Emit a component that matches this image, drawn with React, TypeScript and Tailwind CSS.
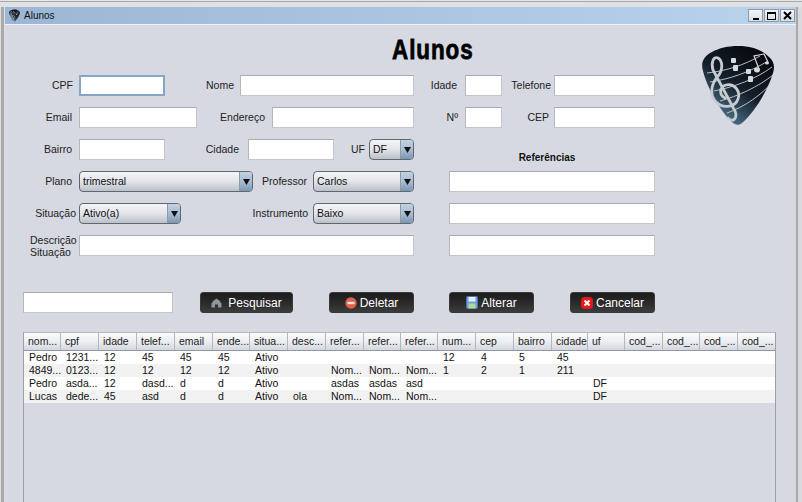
const headers = ['nom...', 'cpf', 'idade', 'telef...', 'email', 'ende...', 'situa...', 'desc...', 'refer...', 'refer...', 'refer...', 'num...', 'cep', 'bairro', 'cidade', 'uf', 'cod_...', 'cod_...', 'cod_...', 'cod_...']

const rows = [
  ['Pedro', '1231...', '12', '45', '45', '45', 'Ativo', '', '', '', '', '12', '4', '5', '45', '', '', '', '', ''],
  ['4849...', '0123...', '12', '12', '12', '12', 'Ativo', '', 'Nom...', 'Nom...', 'Nom...', '1', '2', '1', '211', '', '', '', '', ''],
  ['Pedro', 'asda...', '12', 'dasd...', 'd', 'd', 'Ativo', '', 'asdas', 'asdas', 'asd', '', '', '', '', 'DF', '', '', '', ''],
  ['Lucas', 'dede...', '45', 'asd', 'd', 'd', 'Ativo', 'ola', 'Nom...', 'Nom...', 'Nom...', '', '', '', '', 'DF', '', '', '', ''],
]

// the table columns are not all the same width in the picture
const tableCols = 'grid-cols-[37px_38px_38px_38px_38px_37px_38px_38px_38px_37px_37px_38px_38px_38px_36px_37px_38px_37px_38px_37px]'

function Pick({ className, id }: { className: string; id: string }) {
  return (
    <svg viewBox="0 0 72 81" className={className}>
      <defs>
        <linearGradient id={id} x1="0.8" y1="0.05" x2="0.25" y2="0.9">
          <stop offset="0" stopColor="#05080b" />
          <stop offset="0.55" stopColor="#141f2a" />
          <stop offset="1" stopColor="#4a7088" />
        </linearGradient>
      </defs>
      <path d="M36 1C50 1 60 5 67 12C72 16 73 22 71 28C65 48 50 70 40 78C37 81 33 80 30 77C20 68 5 44 0.5 24C-1 17 2 11 10 7C17 3 26 1 36 1Z" fill={`url(#${id})`} />
      <g fill="none" stroke="#c9ced3" strokeWidth="0.9">
        <path d="M5 28C24 26 42 20 58 11" />
        <path d="M8 37C28 34 48 27 66 16" />
        <path d="M12 46C32 42 54 34 70 22" />
        <path d="M18 56C36 51 56 42 71 30" />
        <path d="M25 68C42 62 60 50 71 36" />
      </g>
      <path d="M23 53C17 50 17 42 24 40C32 38 39 46 36 54C33 63 20 64 13 56C7 48 10 38 16 31C21 25 21 16 16 13C11 11 9 18 11 25L33 66C36 74 30 78 26 73" fill="none" stroke="#c6cbd0" strokeWidth="2.8" strokeLinecap="round" />
      <g fill="#d6dade">
        <rect x="29" y="13" width="5" height="5" rx="1" />
        <rect x="31" y="20" width="5" height="6" rx="1" />
        <rect x="44" y="24" width="5" height="5" rx="1" />
        <rect x="46" y="31" width="5" height="6" rx="1" />
        <ellipse cx="55" cy="25" rx="3" ry="2.4" />
        <ellipse cx="65" cy="18" rx="2" ry="1.6" />
      </g>
      <path d="M57 24L52 11L62 9L66 17" fill="none" stroke="#d6dade" strokeWidth="1.2" />
    </svg>
  )
}

function Label({ className, children }: { className: string; children: string }) {
  return <label className={`shrink-0 text-right text-[10.5px] text-[#222] ${className}`}>{children}</label>
}

function Input({ className, focused }: { className: string; focused?: boolean }) {
  return (
    <div
      className={`h-[21px] shrink-0 bg-white ${
        focused
          ? 'border-2 border-[#87a6c6]'
          : 'border border-[#c4c6ca] border-t-[#a9abaf] border-l-[#b5b7bb]'
      } ${className}`}
    />
  )
}

function Select({ className, value }: { className: string; value: string }) {
  return (
    <div className={`flex h-[21px] shrink-0 overflow-hidden rounded-[4px] border border-[#5e6873] bg-gradient-to-b from-[#f4f5f7] via-[#e2e4e9] to-[#bcc0c8] ${className}`}>
      <span className="flex-1 truncate pl-[3px] text-[10.5px] leading-[19px] text-[#111]">{value}</span>
      <span className="flex w-[13px] items-center justify-center border-l border-[#8e9aa8] bg-gradient-to-b from-[#c3d0de] via-[#a8bdd3] to-[#7f98b2]">
        <svg width="7" height="6" viewBox="0 0 7 6"><path d="M0 0H7L3.5 6Z" fill="#111" /></svg>
      </span>
    </div>
  )
}

function Button({ className, label, icon }: { className: string; label: string; icon: React.ReactNode }) {
  return (
    <button className={`flex h-[21px] shrink-0 items-center justify-center gap-[3px] rounded-[3px] border border-[#3a3a3a] bg-gradient-to-b from-[#1c1c1c] via-[#2a2a2a] to-[#3c3c3c] text-[12px] text-white ${className}`}>
      {icon}
      {label}
    </button>
  )
}

const HomeIcon = (
  <svg width="11" height="10" viewBox="0 0 11 10" className="mr-[3px]">
    <path d="M5.5 0.5L1.5 3.5V5H0.5V9.5H4V6.5H7V9.5H10.5V5H9.5V3.5Z" fill="#8f959d" />
  </svg>
)

const StopIcon = (
  <svg width="12" height="12" viewBox="0 0 12 12">
    <circle cx="6" cy="6" r="5.7" fill="#e2604f" />
    <rect x="2.5" y="4.8" width="7" height="2.4" fill="#f6e6e2" />
  </svg>
)

const SaveIcon = (
  <svg width="12" height="13" viewBox="0 0 12 13">
    <rect x="0.5" y="0.5" width="11" height="12" rx="1" fill="#6f9fd8" stroke="#4a76ad" />
    <rect x="2.5" y="1" width="7" height="4.5" fill="#e8eef6" />
    <rect x="2.5" y="7.5" width="7" height="5" fill="#b6d59a" />
  </svg>
)

const CancelIcon = (
  <svg width="12" height="12" viewBox="0 0 12 12">
    <rect width="12" height="12" rx="3.5" fill="#e8151b" />
    <path d="M3.5 3.5L8.5 8.5M8.5 3.5L3.5 8.5" stroke="#fff" strokeWidth="2" />
  </svg>
)

function WindowButton({ children }: { children: React.ReactNode }) {
  return (
    <div className="flex h-[13px] w-[15px] items-center justify-center border border-[#8f9aa6] bg-gradient-to-b from-[#f4f6f8] to-[#d9dde3]">
      {children}
    </div>
  )
}

export default function App() {
  return (
    <div className="flex h-[502px] w-[802px] flex-col overflow-hidden bg-[#e4e5e7] font-['Liberation_Sans',sans-serif]">
      <div className="mt-[1px] h-[6px] shrink-0 border-t border-[#a9a9a9] bg-[#dfe1e4]" />
      <div className="flex min-h-0 flex-1">
        <div className="w-[5px] shrink-0 border-x border-[#e0e0e0] bg-[#a9a9a9]" />
        <div className="flex w-[791px] shrink-0 flex-col">
          <div className="flex h-[18px] shrink-0 items-center border-b border-[#eef2f6] bg-gradient-to-r from-[#9cb7d5] to-[#b9d3ed] pl-[4px]">
            <Pick id="small-pick" className="h-[13px] w-[11px]" />
            <span className="ml-[4px] text-[10px] text-[#111]">Alunos</span>
            <div className="ml-auto mr-[1px] flex gap-[1px]">
              <WindowButton><span className="mt-[6px] h-[2px] w-[6px] bg-black" /></WindowButton>
              <WindowButton><span className="h-[8px] w-[9px] border border-t-2 border-black" /></WindowButton>
              <WindowButton>
                <svg width="9" height="9" viewBox="0 0 9 9"><path d="M1 1L8 8M8 1L1 8" stroke="#000" strokeWidth="2" /></svg>
              </WindowButton>
            </div>
          </div>

          <div className="flex min-h-0 flex-1 flex-col bg-[#d6d9e1]">
            <div className="flex shrink-0">
              <div className="w-[697px] shrink-0">
                <h1 className="ml-[387px] flex h-[50px] origin-left scale-x-[0.8] items-center text-[28px] font-black tracking-[1.2px] text-black [-webkit-text-stroke:0.8px_black]">Alunos</h1>

                <div className="flex flex-col gap-[11px]">
                  <div className="flex h-[21px] items-center">
                    <Label className="w-[68px]">CPF</Label>
                    <Input focused className="ml-[6px] w-[86px]" />
                    <Label className="w-[69px]">Nome</Label>
                    <Input className="ml-[6px] w-[174px]" />
                    <Label className="w-[43px]">Idade</Label>
                    <Input className="ml-[8px] w-[37px]" />
                    <Label className="w-[49px]">Telefone</Label>
                    <Input className="ml-[3px] w-[101px]" />
                  </div>

                  <div className="flex h-[21px] items-center">
                    <Label className="w-[67px]">Email</Label>
                    <Input className="ml-[7px] w-[118px]" />
                    <Label className="w-[68px]">Endereço</Label>
                    <Input className="ml-[7px] w-[142px]" />
                    <Label className="w-[44px]">Nº</Label>
                    <Input className="ml-[7px] w-[37px]" />
                    <Label className="w-[47px]">CEP</Label>
                    <Input className="ml-[5px] w-[101px]" />
                  </div>

                  <div className="flex h-[21px] items-center">
                    <Label className="w-[67px]">Bairro</Label>
                    <Input className="ml-[7px] w-[86px]" />
                    <Label className="w-[74px]">Cidade</Label>
                    <Input className="ml-[9px] w-[86px]" />
                    <Label className="w-[31px]">UF</Label>
                    <Select className="ml-[4px] w-[45px]" value="DF" />
                    <span className="ml-[35px] mt-[16px] w-[196px] text-center text-[10px] font-bold text-[#111]">Referências</span>
                  </div>

                  <div className="flex h-[21px] items-center">
                    <Label className="w-[67px]">Plano</Label>
                    <Select className="ml-[7px] w-[174px]" value="trimestral" />
                    <Label className="w-[54px]">Professor</Label>
                    <Select className="ml-[6px] w-[101px]" value="Carlos" />
                    <Input className="ml-[35px] w-[206px]" />
                  </div>

                  <div className="flex h-[21px] items-center">
                    <Label className="w-[71px]">Situação</Label>
                    <Select className="ml-[3px] w-[102px]" value="Ativo(a)" />
                    <Label className="w-[127px]">Instrumento</Label>
                    <Select className="ml-[5px] w-[101px]" value="Baixo" />
                    <Input className="ml-[35px] w-[206px]" />
                  </div>

                  <div className="flex h-[21px] items-center">
                    <label className="ml-[25px] w-[49px] shrink-0 text-[10.5px] leading-[12px] text-[#222]">Descrição<br />Situação</label>
                    <Input className="w-[335px]" />
                    <Input className="ml-[35px] w-[206px]" />
                  </div>
                </div>

                <div className="mt-[36px] flex h-[21px] items-center">
                  <Input className="ml-[18px] w-[150px]" />
                  <Button className="ml-[27px] w-[93px]" label="Pesquisar" icon={HomeIcon} />
                  <Button className="ml-[36px] w-[85px]" label="Deletar" icon={StopIcon} />
                  <Button className="ml-[35px] w-[85px]" label="Alterar" icon={SaveIcon} />
                  <Button className="ml-[36px] w-[85px]" label="Cancelar" icon={CancelIcon} />
                </div>
              </div>
              <Pick id="big-pick" className="mt-[20px] h-[81px] w-[72px] shrink-0" />
            </div>

            <div className="ml-[18px] mt-[19px] min-h-0 w-[753px] flex-1 border-x border-[#9a9fa8] border-t border-t-[#b4b8bf]">
              <div className={`grid border-b border-[#8f98a4] ${tableCols}`}>
                {headers.map((h, i) => (
                  <div key={i} className="h-[17px] overflow-hidden whitespace-nowrap border-r border-[#b3b8c0] bg-gradient-to-b from-[#fbfbfc] via-[#eceef1] to-[#d3d7de] pl-[4px] text-[10.5px] leading-[16px] text-[#222] last:border-r-0">
                    {h}
                  </div>
                ))}
              </div>
              {rows.map((row, r) => (
                <div key={r} className={`grid h-[13px] ${tableCols} ${r % 2 === 0 ? 'bg-white' : 'bg-[#f2f2f2]'}`}>
                  {row.map((cell, c) => (
                    <div key={c} className="overflow-hidden whitespace-nowrap pl-[5px] text-[10.5px] leading-[13px] text-[#111]">{cell}</div>
                  ))}
                </div>
              ))}
            </div>
          </div>
        </div>
        <div className="w-[6px] shrink-0 border-l-2 border-[#a9a9a9] bg-[#d9dadd]" />
      </div>
    </div>
  )
}
